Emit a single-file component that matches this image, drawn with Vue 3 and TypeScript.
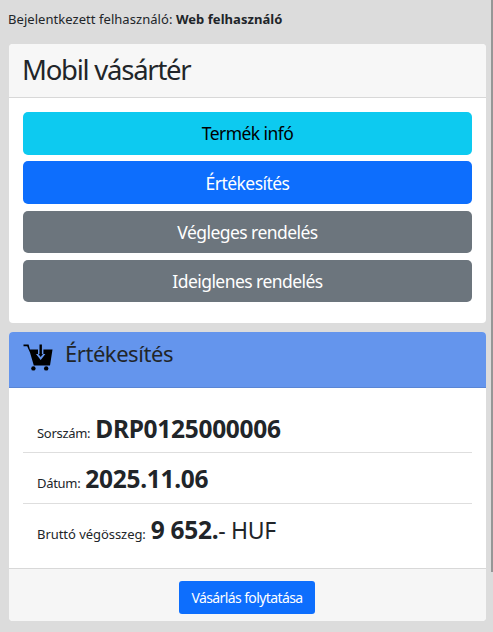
<script setup lang="ts">
const menu = [
  { label: 'Termék infó', cls: 'info' },
  { label: 'Értékesítés', cls: 'primary' },
  { label: 'Végleges rendelés', cls: 'secondary' },
  { label: 'Ideiglenes rendelés', cls: 'secondary' },
]
</script>

<template>
  <div class="page">
    <div class="user">Bejelentkezett felhasználó: <b>Web felhasználó</b></div>
    <section class="card">
      <header class="head"><h1>Mobil vásártér</h1></header>
      <div class="menu">
        <button v-for="m in menu" :key="m.label" class="btn" :class="m.cls">{{ m.label }}</button>
      </div>
    </section>
    <section class="card second">
      <header class="head2">
        <svg class="cart" viewBox="0 0 30 28" width="30" height="28">
          <path fill="#000" d="M0.5 0.5H5.6L6.9 5.5H15V10H13L17.7 16 22.4 10H20.4V5.5H29.5L27 21.5H10.8L7 8.5 4.2 2.2H0.5z" />
          <rect x="16.5" y="0.5" width="2.4" height="9.5" fill="#000" />
          <path fill="#000" d="M15.4 10h4.6L17.7 13z" />
          <circle cx="10.4" cy="24.4" r="2.2" fill="#000" />
          <circle cx="23.2" cy="24.4" r="2.2" fill="#000" />
        </svg>
        <h2>Értékesítés</h2>
      </header>
      <div class="rows">
        <div class="row"><small>Sorszám:</small> <b>DRP0125000006</b></div>
        <div class="row"><small>Dátum:</small> <b>2025.11.06</b></div>
        <div class="row last"><small>Bruttó végösszeg:</small> <b>9 652.</b><span>- HUF</span></div>
      </div>
      <footer class="foot"><button class="btn primary small">Vásárlás folytatása</button></footer>
    </section>
    <div class="thumb"></div>
  </div>
</template>

<style>
html, body { margin: 0; background: #dcdcdc; }
</style>

<style scoped>
.page {
  position: relative;
  box-sizing: border-box;
  height: 632px;
  overflow: hidden;
  padding: 11px 7px 0 9px;
  background: #dcdcdc;
  color: #212529;
  font-family: "Noto Sans", "Open Sans", sans-serif;
}
.thumb { position: absolute; right: 0; top: 0; width: 2px; height: 572px; background: #969696; }
.user { font-size: 13px; line-height: 17px; margin-left: -1px; margin-bottom: 16px; letter-spacing: 0.05px; }
.card { background: #fff; border-radius: 4px; overflow: hidden; }
.second { margin-top: 9px; }
.head { height: 54px; box-sizing: border-box; background: #f7f7f7; border-bottom: 1px solid #d8d8d8; padding: 0 14px 3px; display: flex; align-items: center; }
h1 { margin: 0 0 0 -1px; font-size: 27.5px; font-weight: 400; letter-spacing: -1.25px; }
.menu { padding: 14px 14px 20.5px; display: flex; flex-direction: column; gap: 6.83px; }
.btn { border: 0; border-radius: 5px; height: 42.5px; font-family: inherit; font-size: 17.5px; letter-spacing: -0.55px; padding: 0; }
.info { background: #0dcaf0; color: #000; }
.primary { background: #0d6efd; color: #fff; }
.secondary { background: #6c757d; color: #fff; }
.head2 { height: 56px; box-sizing: border-box; background: #6495ed; border-bottom: 1px solid #5a86d5; padding: 0 14px 13px; display: flex; align-items: center; gap: 12px; }
h2 { margin: 0; font-size: 22px; font-weight: 400; letter-spacing: -0.45px; }
.cart { flex: none; margin-top: 11px; }
.rows { padding: 15px 14px 0; }
.row { height: 50.5px; box-sizing: border-box; border-bottom: 1px solid #dedede; padding: 1px 14px 0; display: flex; align-items: baseline; gap: 5px; line-height: 50px; font-size: 24.5px; letter-spacing: -0.3px; }
.row small { font-size: 13px; letter-spacing: -0.3px; }
.row b { font-weight: 700; }
.last { border-bottom: 0; height: 64px; padding-top: 1px; gap: 0; }
.last small { margin-right: 5px; letter-spacing: -0.05px; }
.last span { font-size: 23px; }
.foot { height: 53px; box-sizing: border-box; background: #f6f6f6; border-top: 1px solid #d8d8d8; padding: 12px 1px 0 0; display: flex; align-items: flex-start; justify-content: center; }
.small { height: 33px; width: 136px; font-size: 14px; letter-spacing: -0.6px; border-radius: 3px; }
</style>
